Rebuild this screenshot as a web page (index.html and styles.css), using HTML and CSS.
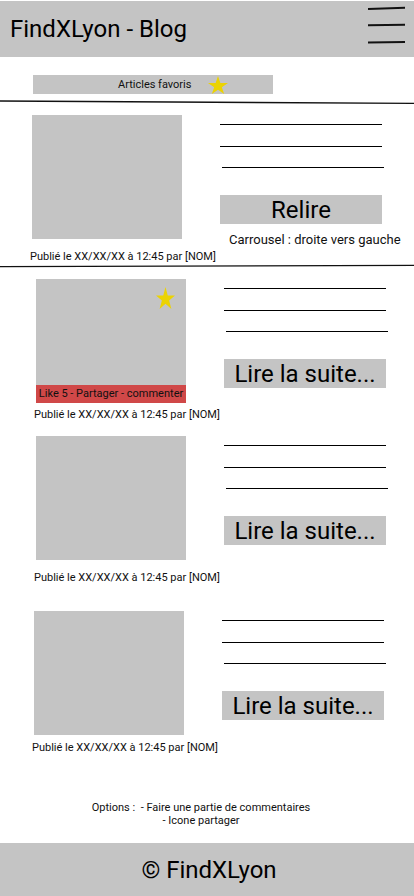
FILE: index.html
```html
<!DOCTYPE html>
<html lang="fr">
<head>
<meta charset="utf-8">
<title>FindXLyon - Blog</title>
<link rel="stylesheet" href="styles.css">
</head>
<body>
<header class="topbar">
  <h1 class="brand">FindXLyon - Blog</h1>
  <svg class="burger" width="38" height="46" viewBox="0 0 38 46" aria-label="menu">
    <line x1="0" y1="3" x2="37" y2="1.8" stroke="#111" stroke-width="2"/>
    <line x1="0" y1="19.2" x2="37" y2="18.8" stroke="#111" stroke-width="2"/>
    <line x1="0" y1="36.6" x2="37" y2="36" stroke="#111" stroke-width="2"/>
  </svg>
</header>

<div class="fav">
  <span class="fav-label">Articles favoris</span>
  <svg class="star fav-star" width="20" height="18" viewBox="0 0 100 95" preserveAspectRatio="none"><polygon points="50,0 61.8,36.3 100,36.3 69.1,58.8 80.9,95 50,72.6 19.1,95 30.9,58.8 0,36.3 38.2,36.3"/></svg>
</div>

<svg class="divider" width="414" height="6" viewBox="0 0 414 6"><line x1="0" y1="2" x2="414" y2="4.4" stroke="#111" stroke-width="1.4"/></svg>

<section class="post post--a post--first">
  <div class="post-media">
    <div class="thumb"></div>
    <p class="meta">Publié le XX/XX/XX à 12:45 par [NOM]</p>
  </div>
  <div class="post-body">
    <span class="rule"></span>
    <span class="rule rule--2"></span>
    <span class="rule rule--3"></span>
    <div class="btn">Relire</div>
    <p class="note">Carrousel : droite vers gauche</p>
  </div>
</section>

<svg class="divider divider--2" width="414" height="6" viewBox="0 0 414 6"><line x1="0" y1="3.6" x2="414" y2="2.4" stroke="#111" stroke-width="1.4"/></svg>

<section class="post post--b post--second">
  <div class="post-media">
    <div class="thumb thumb--social">
      <svg class="star thumb-star" width="19" height="22" viewBox="0 0 100 95" preserveAspectRatio="none"><polygon points="50,0 61.8,36.3 100,36.3 69.1,58.8 80.9,95 50,72.6 19.1,95 30.9,58.8 0,36.3 38.2,36.3"/></svg>
      <div class="social">Like 5 - Partager - commenter</div>
    </div>
    <p class="meta meta--tight">Publié le XX/XX/XX à 12:45 par [NOM]</p>
  </div>
  <div class="post-body">
    <span class="rule"></span>
    <span class="rule rule--2"></span>
    <span class="rule rule--3"></span>
    <div class="btn">Lire la suite...</div>
  </div>
</section>

<section class="post post--b post--third">
  <div class="post-media">
    <div class="thumb"></div>
    <p class="meta">Publié le XX/XX/XX à 12:45 par [NOM]</p>
  </div>
  <div class="post-body">
    <span class="rule"></span>
    <span class="rule rule--2"></span>
    <span class="rule rule--3"></span>
    <div class="btn">Lire la suite...</div>
  </div>
</section>

<section class="post post--c post--fourth">
  <div class="post-media">
    <div class="thumb"></div>
    <p class="meta meta--tight">Publié le XX/XX/XX à 12:45 par [NOM]</p>
  </div>
  <div class="post-body">
    <span class="rule"></span>
    <span class="rule rule--2"></span>
    <span class="rule rule--3"></span>
    <div class="btn">Lire la suite...</div>
  </div>
</section>

<p class="options">Options :&nbsp; - Faire une partie de commentaires<br>- Icone partager</p>

<footer class="footer">© FindXLyon</footer>
</body>
</html>
```

FILE: styles.css
```css
* { box-sizing: border-box; }

html, body {
  margin: 0;
  padding: 0;
  background: #fff;
}

body {
  width: 414px;
  font-family: Roboto, "Liberation Sans", Arial, sans-serif;
  color: #111;
  padding-top: 1px;
}

.topbar {
  height: 56px;
  background: #c4c4c4;
  display: flex;
  align-items: center;
  justify-content: space-between;
  padding: 0 8px 0 10px;
}

.brand {
  margin: 0;
  font-size: 24px;
  font-weight: 400;
  line-height: 28px;
  color: #000;
}

.burger { display: block; }

.fav {
  margin: 18px 0 0 33px;
  width: 240px;
  height: 19px;
  background: #c4c4c4;
  display: flex;
  align-items: center;
  padding-left: 85px;
}

.fav-label {
  font-size: 11px;
  line-height: 13px;
  color: #111;
}

.star { display: block; fill: #ebd302; }

.fav-star { margin-left: 17px; }

.divider {
  display: block;
  margin-top: 5px;
}

.divider--2 { margin-top: 0; }

.post {
  display: flex;
  gap: 38px;
}

.post--a { padding-left: 32px; }
.post--b { padding-left: 36px; }
.post--c { padding-left: 34px; }

.post--first { margin-top: 10px; }
.post--second { margin-top: 10px; }
.post--third { margin-top: 15px; }
.post--fourth { margin-top: 27px; }

.post-media {
  width: 150px;
  flex: none;
}

.thumb {
  height: 124px;
  background: #c4c4c4;
}

.thumb--social {
  position: relative;
  display: flex;
  flex-direction: column;
  justify-content: flex-end;
}

.thumb-star {
  position: absolute;
  top: 8px;
  right: 11px;
}

.social {
  height: 18px;
  background: #d04848;
  font-size: 11px;
  line-height: 18px;
  text-align: center;
  white-space: nowrap;
  color: #111;
}

.meta {
  margin: 11px 0 0 -2px;
  font-size: 11px;
  line-height: 13px;
  white-space: nowrap;
  color: #111;
}

.meta--tight { margin-top: 5px; }
.post--fourth .meta { margin-top: 6px; }

.post-body {
  width: 166px;
  flex: none;
  display: flex;
  flex-direction: column;
  align-items: flex-start;
}

.rule {
  display: block;
  width: 162px;
  height: 0;
  border-top: 1px solid #000;
  margin-top: 9px;
}

.rule--2 { margin-top: 21px; }
.rule--3 { margin-top: 20px; margin-left: 2px; }

.btn {
  margin-top: 27px;
  width: 162px;
  height: 29px;
  padding-top: 2px;
  background: #c4c4c4;
  font-size: 24px;
  line-height: 27px;
  text-align: center;
  color: #000;
  white-space: nowrap;
}

.note {
  margin: 8px 0 0 9px;
  font-size: 13px;
  line-height: 15px;
  white-space: nowrap;
  color: #111;
}

.options {
  margin: 47px 0 0 0;
  padding-right: 12px;
  font-size: 11px;
  line-height: 13px;
  text-align: center;
  color: #111;
}

.footer {
  margin-top: 16px;
  height: 53px;
  background: #c4c4c4;
  display: flex;
  align-items: center;
  justify-content: center;
  padding-left: 4px;
  font-size: 24px;
  color: #000;
}
```
